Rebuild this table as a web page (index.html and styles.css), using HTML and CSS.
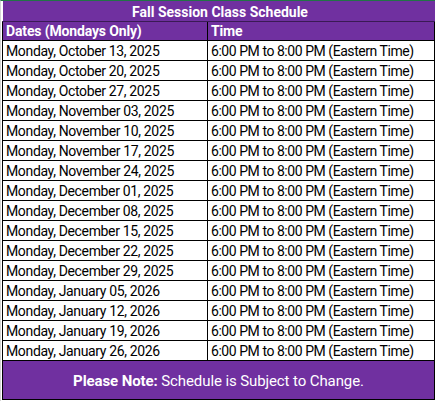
FILE: index.html
```html
<!DOCTYPE html>
<html>
<head>
<meta charset="utf-8">
<link rel="stylesheet" href="styles.css">
</head>
<body>
<div class="sheet">
  <table class="schedule">
    <colgroup><col class="c1"><col class="c2"></colgroup>
    <thead>
      <tr class="title"><th colspan="2">Fall Session Class Schedule</th></tr>
      <tr class="head"><th>Dates (Mondays Only)</th><th>Time</th></tr>
    </thead>
    <tbody>
      <tr><td>Monday, October 13, 2025</td><td>6:00 PM to 8:00 PM (Eastern Time)</td></tr>
      <tr><td>Monday, October 20, 2025</td><td>6:00 PM to 8:00 PM (Eastern Time)</td></tr>
      <tr><td>Monday, October 27, 2025</td><td>6:00 PM to 8:00 PM (Eastern Time)</td></tr>
      <tr><td>Monday, November 03, 2025</td><td>6:00 PM to 8:00 PM (Eastern Time)</td></tr>
      <tr><td>Monday, November 10, 2025</td><td>6:00 PM to 8:00 PM (Eastern Time)</td></tr>
      <tr><td>Monday, November 17, 2025</td><td>6:00 PM to 8:00 PM (Eastern Time)</td></tr>
      <tr><td>Monday, November 24, 2025</td><td>6:00 PM to 8:00 PM (Eastern Time)</td></tr>
      <tr><td>Monday, December 01, 2025</td><td>6:00 PM to 8:00 PM (Eastern Time)</td></tr>
      <tr><td>Monday, December 08, 2025</td><td>6:00 PM to 8:00 PM (Eastern Time)</td></tr>
      <tr><td>Monday, December 15, 2025</td><td>6:00 PM to 8:00 PM (Eastern Time)</td></tr>
      <tr><td>Monday, December 22, 2025</td><td>6:00 PM to 8:00 PM (Eastern Time)</td></tr>
      <tr><td>Monday, December 29, 2025</td><td>6:00 PM to 8:00 PM (Eastern Time)</td></tr>
      <tr><td>Monday, January 05, 2026</td><td>6:00 PM to 8:00 PM (Eastern Time)</td></tr>
      <tr><td>Monday, January 12, 2026</td><td>6:00 PM to 8:00 PM (Eastern Time)</td></tr>
      <tr><td>Monday, January 19, 2026</td><td>6:00 PM to 8:00 PM (Eastern Time)</td></tr>
      <tr><td>Monday, January 26, 2026</td><td>6:00 PM to 8:00 PM (Eastern Time)</td></tr>
    </tbody>
    <tfoot>
      <tr class="note"><td colspan="2"><b>Please Note:</b> Schedule is Subject to Change.</td></tr>
    </tfoot>
  </table>
</div>
</body>
</html>
```

FILE: styles.css
```css
html, body {
  margin: 0;
  padding: 0;
  background: #ffffff;
}
.sheet {
  width: 435px;
  height: 401px;
  box-sizing: border-box;
  border-top: 1px solid #217346;
  border-left: 1px solid #d4d4d4;
  padding-left: 1px;
  overflow: hidden;
}
.schedule {
  border-collapse: collapse;
  table-layout: fixed;
  width: 432px;
  font-family: Roboto, "Liberation Sans", sans-serif;
  font-size: 14px;
  letter-spacing: -0.35px;
  color: #000;
}
.c1 { width: 205px; }
.c2 { width: 227px; }
.schedule th,
.schedule td {
  padding: 0 0 0 3px;
  text-align: left;
  white-space: nowrap;
  overflow: hidden;
  line-height: 18px;
  height: 19px;
  box-sizing: border-box;
  border: 1px solid #000;
}
.schedule tbody td:last-child {
  letter-spacing: -0.45px;
}
.title th {
  background: #7030a0;
  color: #fff;
  text-align: center;
  font-weight: 700;
  letter-spacing: 0;
  height: 19px;
  padding-top: 2px;
  border: none;
  border-bottom: 1px solid #3a1a55;
}
.head th {
  background: #7030a0;
  color: #fff;
  font-weight: 700;
  letter-spacing: -0.15px;
  height: 19px;
}
.schedule tbody td {
  height: 20px;
}
.note td {
  background: #7030a0;
  color: #fff;
  text-align: center;
  height: 39px;
  padding: 1px 0 0 0;
  font-size: 15px;
  letter-spacing: -0.1px;
}
.note b { font-weight: 700; }
```
